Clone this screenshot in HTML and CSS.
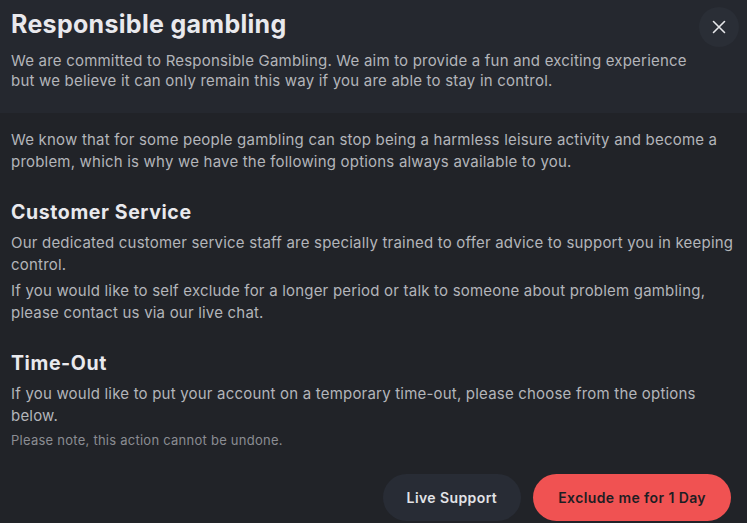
FILE: index.html
```html
<!DOCTYPE html>
<html>
<head>
<meta charset="utf-8">
<link rel="stylesheet" href="styles.css">
</head>
<body>
<div class="modal">
  <header class="head">
    <h1 class="title">Responsible gambling</h1>
    <p class="text">We are committed to Responsible Gambling. We aim to provide a fun and exciting experience but we believe it can only remain this way if you are able to stay in control.</p>
    <button class="close" aria-label="Close">
      <svg width="14" height="14" viewBox="0 0 14 14"><path d="M1.5 1.5L12.5 12.5M12.5 1.5L1.5 12.5" stroke="#e6e7ea" stroke-width="1.6" stroke-linecap="round"/></svg>
    </button>
  </header>
  <main class="body">
    <p class="text">We know that for some people gambling can stop being a harmless leisure activity and become a problem, which is why we have the following options always available to you.</p>
    <h2 class="sub">Customer Service</h2>
    <p class="text">Our dedicated customer service staff are specially trained to offer advice to support you in keeping control.</p>
    <p class="text">If you would like to self exclude for a longer period or talk to someone about problem gambling, please contact us via our live chat.</p>
    <h2 class="sub">Time-Out</h2>
    <p class="text">If you would like to put your account on a temporary time-out, please choose from the options below.</p>
    <p class="note">Please note, this action cannot be undone.</p>
    <div class="actions">
      <button class="btn btn-dark">Live Support</button>
      <button class="btn btn-red">Exclude me for 1 Day</button>
    </div>
  </main>
</div>
</body>
</html>
```
FILE: styles.css
```css
html, body {
  margin: 0;
  padding: 0;
  background: #212328;
}
body {
  font-family: Inter, "Noto Sans", sans-serif;
  width: 747px;
  height: 523px;
  overflow: hidden;
}
.modal {
  display: flex;
  flex-direction: column;
}
.head {
  position: relative;
  background: #25282f;
  padding: 8px 11px 22px;
}
.title {
  margin: 0;
  font-size: 25px;
  font-weight: 700;
  color: #e9e9ed;
  line-height: 32px;
  letter-spacing: 0.3px;
}
.text {
  margin: 0;
  font-size: 15px;
  line-height: 21.5px;
  color: #b3b5ba;
  letter-spacing: 0.2px;
}
.head .text {
  margin-top: 11px;
  line-height: 20px;
  max-width: 690px;
}
.close {
  position: absolute;
  top: 7px;
  right: 8px;
  width: 40px;
  height: 40px;
  border-radius: 50%;
  border: none;
  background: #2a2e36;
  display: flex;
  align-items: center;
  justify-content: center;
  padding: 0;
}
.body {
  padding: 16px 11px 0;
}
.sub {
  margin: 27px 0 0;
  font-size: 19.5px;
  font-weight: 700;
  line-height: 26px;
  color: #e9e9ed;
  letter-spacing: 0.6px;
}
.sub + .text {
  margin-top: 7px;
}
.text + .text {
  margin-top: 5px;
}
.note {
  margin: 4.5px 0 0;
  font-size: 13px;
  line-height: 18px;
  color: #8b8d93;
  letter-spacing: 0.25px;
}
.actions {
  display: flex;
  justify-content: flex-end;
  gap: 12px;
  margin-top: 25px;
  padding-right: 5px;
}
.btn {
  height: 47px;
  border: none;
  border-radius: 24px;
  font-family: inherit;
  font-size: 14px;
  font-weight: 600;
  letter-spacing: 0.4px;
  padding: 0 25px;
}
.btn-dark {
  background: #282c35;
  color: #e2e3e7;
  padding: 0 24px;
}
.btn-red {
  background: #f05252;
  color: #1d1e23;
}
```
